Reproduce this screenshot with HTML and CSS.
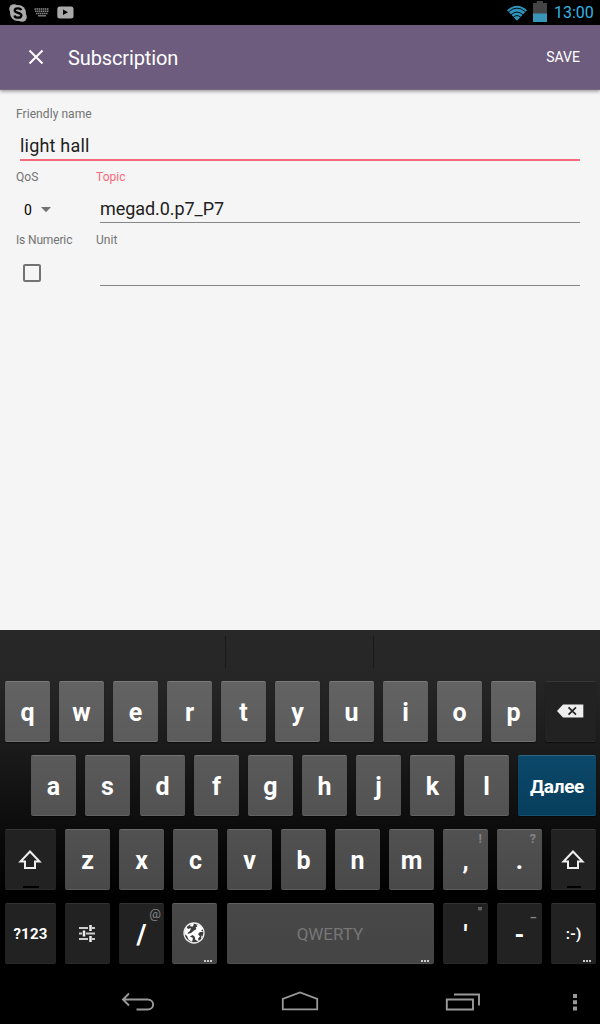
FILE: index.html
```html
<!DOCTYPE html>
<html lang="en">
<head>
<meta charset="utf-8">
<title>Subscription</title>
<link rel="stylesheet" href="styles.css">
</head>
<body>
<div class="screen">
  <header class="status">
    <div class="status-left">
      <svg width="18" height="18" viewBox="0 0 18 18"><circle cx="9" cy="9" r="8" fill="#aaa"/><circle cx="5" cy="5" r="4.800" fill="#aaa"/><circle cx="13" cy="13" r="4.800" fill="#aaa"/><path d="M12.300 6.200C11.800 4.800 10.500 4.300 9 4.300C7 4.300 5.700 5.200 5.700 6.600C5.700 9.500 12.400 8 12.400 11.200C12.400 12.800 11 13.700 9.100 13.700C7.200 13.700 5.800 12.900 5.500 11.400" fill="none" stroke="#000" stroke-width="2.300"/></svg>
      <svg class="i-kbd" width="16" height="9" viewBox="0 0 16 9"><path d="M0.500 1H15M1 3.200H14.500M2 5.400H13.500" stroke="#888" stroke-width="1.500" stroke-dasharray="1.500 .5"/><path d="M4 7.800H12" stroke="#888" stroke-width="1.300"/></svg>
      <svg class="i-yt" width="17" height="13" viewBox="0 0 17 13"><rect x=".3" y=".5" width="16.200" height="12" rx="2.500" fill="#aaa"/><path d="M6 3.600L11 6.300L6 9z" fill="#000"/></svg>
    </div>
    <div class="status-right">
      <svg width="20" height="16" viewBox="0 0 20 16"><path d="M0 5.300Q10-4 20 5.300L10 15.800z" fill="#2f94bd"/><path d="M1.500 6.800Q10-.5 18.500 6.800M4 9.700Q10 4.500 16 9.700M6.300 12.200Q10 9 13.700 12.200" fill="none" stroke="#000" stroke-width=".9"/></svg>
      <svg class="i-bat" width="14" height="21" viewBox="0 0 14 21"><path d="M3.700 0h6.300v2h4v11H0V2h3.700z" fill="#444"/><path d="M0 12.500h14V21H0z" fill="#3a96b8"/></svg>
      <span class="clock">13:00</span>
    </div>
  </header>
  <nav class="appbar">
    <svg class="close" width="16" height="16" viewBox="0 0 16 16"><path d="M1.500 1.500L14.500 14.500M14.500 1.500L1.500 14.500" stroke="#fff" stroke-width="2"/></svg>
    <h1 class="title">Subscription</h1>
    <span class="save">SAVE</span>
  </nav>
  <main class="form">
    <div class="field wide">
      <label class="label">Friendly name</label>
      <div class="input focused"><span class="value name">light hall</span></div>
    </div>
    <div class="field">
      <label class="label">QoS</label>
      <div class="select"><span>0</span><svg width="10" height="6" viewBox="0 0 10 6"><path d="M0 0h10L5 5.300z" fill="#737373"/></svg></div>
    </div>
    <div class="field">
      <label class="label accent">Topic</label>
      <div class="input"><span class="value topic">megad.0.p7_P7</span></div>
    </div>
    <div class="field">
      <label class="label numeric">Is Numeric</label>
      <div class="checkbox"></div>
    </div>
    <div class="field">
      <label class="label">Unit</label>
      <div class="input"></div>
    </div>
  </main>
  <section class="keyboard">
    <div class="suggestions"><i></i><i></i><i></i></div>
    <div class="row r1">
      <b class="key">q</b><b class="key">w</b><b class="key">e</b><b class="key">r</b><b class="key">t</b><b class="key">y</b><b class="key">u</b><b class="key">i</b><b class="key">o</b><b class="key">p</b>
      <b class="key dark side icon"><svg width="28" height="14" viewBox="0 0 28 14"><path d="M1 7L7 .5H27.300V13.500H7z" fill="#eee"/><path d="M12.500 3.400L20 10.600M20 3.400L12.500 10.600" stroke="#222" stroke-width="1.700"/></svg></b>
    </div>
    <div class="row r2">
      <b class="key">a</b><b class="key">s</b><b class="key shift-gap">d</b><b class="key">f</b><b class="key">g</b><b class="key">h</b><b class="key">j</b><b class="key">k</b><b class="key">l</b>
      <b class="key next">Далее</b>
    </div>
    <div class="row r3">
      <b class="key dark side icon shift"><svg width="24" height="20" viewBox="0 0 24 20"><path d="M12 1.500L21.500 11.500H17V18H7V11.500H2.500z" fill="none" stroke="#eee" stroke-width="2"/></svg><i class="lock"></i></b>
      <b class="key">z</b><b class="key">x</b><b class="key">c</b><b class="key">v</b><b class="key">b</b><b class="key">n</b><b class="key">m</b>
      <b class="key">,<span class="hint">!</span></b><b class="key">.<span class="hint">?</span></b>
      <b class="key dark icon shift"><svg width="24" height="20" viewBox="0 0 24 20"><path d="M12 1.500L21.500 11.500H17V18H7V11.500H2.500z" fill="none" stroke="#eee" stroke-width="2"/></svg><i class="lock narrow"></i></b>
    </div>
    <div class="row r4">
      <b class="key dark side num">?123</b>
      <b class="key dark icon"><svg width="18" height="18" viewBox="0 0 18 18"><path d="M1 4H10M14 4H17M1 9.500H4M8 9.500H17M1 15H10M14 15H17" stroke="#ccc" stroke-width="1.800"/><path d="M12.500 1V7M6 6.500V12.500M12.500 12V18" stroke="#eee" stroke-width="2.500"/></svg></b>
      <b class="key dark slash">/<span class="hint at">@</span></b>
      <b class="key globe icon"><svg width="22" height="22" viewBox="0 0 22 22"><circle cx="11" cy="11" r="10" fill="#3c3c3c" stroke="#eee" stroke-width="1.300"/><path d="M1.500 9L3.500 5L5 7L8 6L7 9L5.500 10L4.500 12L8 11L11 8.500L13.500 7L12.500 5.500L14.500 4.500L13 2.500L17 3.500L20 7L18 8.500L20.800 10L17 10L15 12L17 14.500L15 16.500L16 19.500L12.500 18L11.500 14.500L9.500 13L7 14.500L10 16L9 20L5.500 17.500L4 14L1.500 12zM7 2.500L11 1.500L10 4.500L7.500 4.500zM18.500 13.500L20 14L18 17z" fill="#fff"/></svg><i class="dots"></i></b>
      <b class="key space">QWERTY<i class="dots"></i></b>
      <b class="key dark quote">'<span class="hint">"</span></b>
      <b class="key dark dash">-<span class="hint under">_</span></b>
      <b class="key dark smile">:-)<i class="dots"></i></b>
    </div>
  </section>
  <footer class="navbar">
    <svg class="back" width="34" height="20" viewBox="0 0 34 20"><path d="M8 1.500L2 7.500L8 13.500M2 7.500H26.500C34 7.500 34 17.500 26.500 17.500H15.500" fill="none" stroke="#999" stroke-width="1.900"/></svg>
    <svg class="home" width="38" height="20" viewBox="0 0 38 20"><path d="M1.800 18.300V7.800L19 1.500L36.200 7.800V18.300z" fill="none" stroke="#999" stroke-width="1.800"/></svg>
    <svg class="recent" width="36" height="18" viewBox="0 0 36 18"><path d="M9 1.500H34V12.500M1.800 6.500H28V16.500H1.800z" fill="none" stroke="#999" stroke-width="1.900"/></svg>
    <svg class="more" width="4" height="18" viewBox="0 0 4 18"><path d="M0 1h4v4H0zM0 7.300h4v4H0zM0 13.600h4v4H0z" fill="#999"/></svg>
  </footer>
</div>
</body>
</html>
```

FILE: styles.css
```css
* { box-sizing: border-box; }
body { margin: 0; font-family: Roboto, "Noto Sans", sans-serif; background: #f5f5f5; }
svg { display: block; flex: none; }
.screen { width: 600px; height: 1024px; display: flex; flex-direction: column; overflow: hidden; }

.status { height: 25px; background: #000; display: flex; justify-content: space-between; padding: 0 6px 0 9px; }
.status-left { display: flex; align-items: center; }
.i-kbd { margin-left: 7px; }
.i-yt { margin-left: 7px; }
.status-right { display: flex; align-items: center; }
.i-bat { margin: -2px 7px 0 6px; }
.clock { color: #33b5e5; font-size: 16px; line-height: 25px; width: 40px; white-space: nowrap; }

.appbar { height: 65px; background: #6d5c7d; display: flex; align-items: center; padding: 0 20px 0 28px; box-shadow: 0 1px 4px rgba(0,0,0,.45); border-bottom: 1px solid #75697f; z-index: 1; }
.title { margin: 2px 0 0 24px; font-size: 20px; font-weight: 400; letter-spacing: -.12px; color: #fff; }
.save { margin-left: auto; font-size: 14px; color: #fff; }

.form { flex: 1; background: #f5f5f5; padding: 16px 20px 0 16px; display: grid; grid-template-columns: 80px 1fr; grid-auto-rows: 63px; }
.wide { grid-column: 1 / 3; }
.label { display: block; font-size: 12px; line-height: 16px; letter-spacing: .07px; color: #737373; }
.numeric { letter-spacing: -.15px; }
.accent { color: #f96a7c; }
.input { margin-left: 4px; height: 38px; padding-top: 12px; border-bottom: 1px solid #868686; }
.input.focused { height: 39px; border-bottom: 2px solid #f86b7c; }
.value { display: block; font-size: 18px; line-height: 24px; color: #212121; }
.value.name { letter-spacing: .2px; }
.value.topic { letter-spacing: -.06px; }
.select { display: flex; align-items: center; gap: 9px; padding: 12px 0 0 8px; font-size: 14px; line-height: 26px; color: #000; }
.checkbox { width: 18px; height: 18px; margin: 16px 0 0 7px; border: 2px solid #737373; border-radius: 2px; }

.keyboard { height: 348px; background: linear-gradient(#282828 0, #262626 14%, #1a1a1a 35%, #0a0a0a 60%, #000 78%); }
.suggestions { height: 51px; padding: 6px 0 13px; display: flex; }
.suggestions i { width: 226px; border-right: 1px solid #1a1a1a; }
.suggestions i:nth-child(2) { width: 148px; }
.suggestions i:nth-child(3) { border: 0; }
.row { display: flex; gap: 9px; height: 61px; margin-bottom: 13px; padding-left: 5px; }
.r2 { padding-left: 31px; }
.key { position: relative; flex: none; width: 45px; height: 61px; border-radius: 2px; display: flex; align-items: center; justify-content: center; padding-top: 2px; font-size: 25px; color: #fff; border-top: 1px solid #7b7b7b; border-bottom: 1px solid #707070; background: linear-gradient(#636363, #5b5b5b); box-shadow: 0 1px 1px rgba(0,0,0,.5); }
.r2 .key { background: linear-gradient(#5a5a5a, #525252); border-color: #737373 #000 #626262; }
.r3 .key { background: linear-gradient(#515151, #494949); border-color: #6b6b6b #000 #5a5a5a; }
.r4 .key { background: linear-gradient(#484848, #444); border-color: #606060 #000 #505050; }
.row .dark { background: #222; border-color: #363636 #000 #292929; }
.r4 .dark { border-color: #333 #000 #292929; }
.side { width: 51px; }
.row .icon { padding: 0 2px 2px 0; }
.row .shift { padding-bottom: 0; }
.shift-gap { margin-left: 1px; }
.r2 .next { width: 78px; font-size: 19px; background: linear-gradient(#0b4869, #073e5d); border-color: #326580 #000 #155172; letter-spacing: -.3px; }
.lock { position: absolute; bottom: 1px; left: 18px; width: 16px; height: 2px; background: #000; }
.lock.narrow { left: 16px; width: 14px; }
.hint { position: absolute; top: 0; right: 6px; font-size: 12.5px; line-height: 17px; color: #858585; }
.at { top: 1px; right: 3px; font-size: 13px; font-weight: 400; }
.under { top: 0; }
.num { font-size: 15px; letter-spacing: .2px; padding-top: 1px; }
.slash { font-size: 27px; }
.globe { margin-left: -1px; }
.r4 .space { width: 207px; margin-left: 1px; padding: 0 1px 0 0; font-size: 17px; font-weight: 400; color: #777; }
.dash { padding-top: 4px; }
.smile { font-size: 15px; padding-top: 1px; }
.dots { position: absolute; right: 5px; bottom: 1px; width: 8px; height: 2px; background: repeating-linear-gradient(90deg, #ccc 0 2px, transparent 2px 3px); }
.navbar { height: 46px; background: #000; display: flex; align-items: center; padding-top: 1px; }
.back { margin-left: 121px; }
.home { margin: -2px 0 0 126px; }
.recent { margin-left: 126px; }
.more { margin-left: 92px; }
```
